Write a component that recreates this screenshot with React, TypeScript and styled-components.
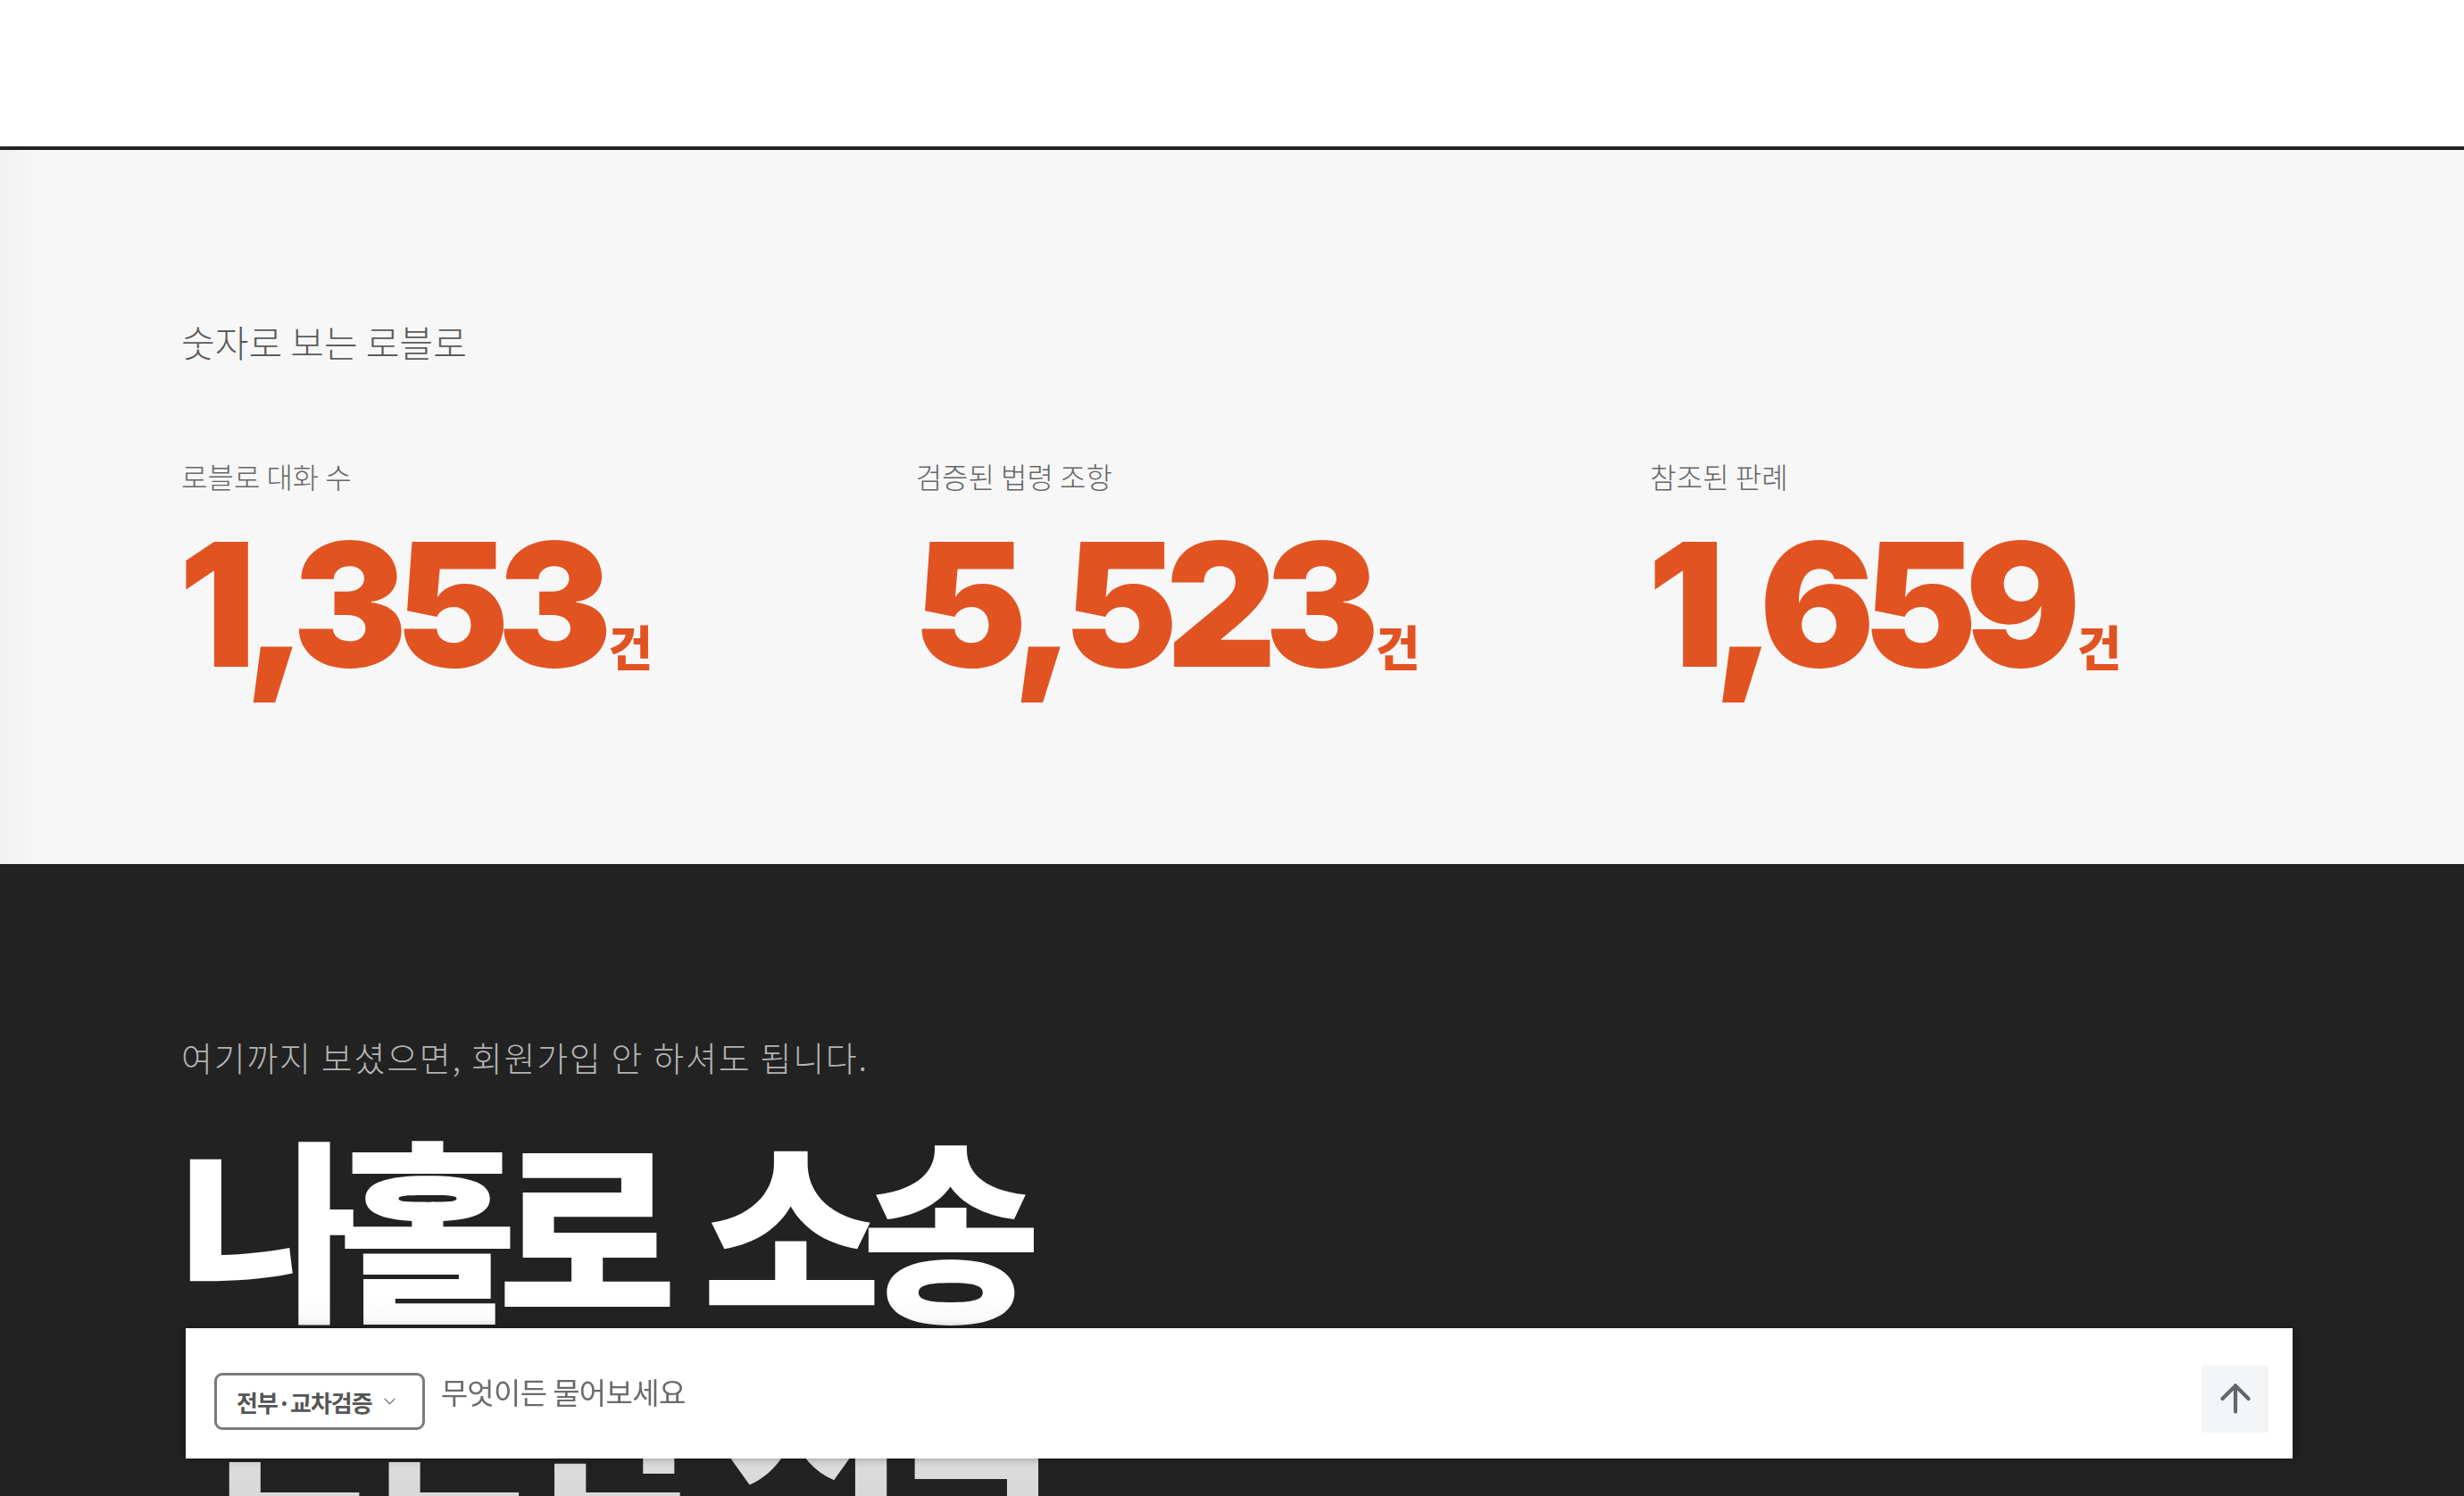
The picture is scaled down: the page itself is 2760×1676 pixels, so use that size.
import React from 'react';
import styled, { createGlobalStyle } from 'styled-components';
import { ArrowUp } from 'lucide-react';

const GlobalStyle = createGlobalStyle`
  html, body {
    margin: 0;
    padding: 0;
    height: 1676px;
    overflow: hidden;
    background: #222222;
  }
  body {
    font-family: "Noto Sans CJK KR", "Noto Sans", sans-serif;
  }
  * { box-sizing: border-box; }
`;

const sans = `"Noto Sans CJK KR", "Noto Sans", sans-serif`;

const Header = styled.header`
  height: 168px;
  background: #fff;
  border-bottom: 4px solid #222;
`;

const StatsSection = styled.section`
  height: 800px;
  background: linear-gradient(90deg, #f1f1f1 0px, #f7f7f7 44px, #f7f7f7 100%);
  padding: 194px 0 0;
`;

const Container = styled.div`
  width: 2360px;
  margin: 0 auto;
`;

const Eyebrow = styled.h2<{ $dark?: boolean }>`
  margin: 0;
  font-family: ${sans};
  font-weight: 300;
  font-size: ${p => (p.$dark ? 38 : 41)}px;
  line-height: 1;
  color: ${p => (p.$dark ? '#b4b4b4' : '#5c5c5c')};
  letter-spacing: ${p => (p.$dark ? '0.045em' : '0')};
  padding-left: 3px;
`;

const StatsGrid = styled.div`
  display: grid;
  grid-template-columns: repeat(3, 1fr);
  column-gap: 108px;
  margin-top: 114px;
`;

const Stat = styled.div`
  display: flex;
  flex-direction: column;
`;

const StatLabel = styled.div`
  font-family: ${sans};
  font-weight: 300;
  font-size: 32px;
  line-height: 1;
  color: #666;
  padding-left: 3px;
`;

const StatValue = styled.div`
  display: flex;
  align-items: baseline;
  margin-top: 32px;
  color: #e25322;
`;

const Number = styled.span`
  font-family: Inter, "Liberation Sans", sans-serif;
  font-weight: 900;
  font-size: 192px;
  line-height: 1;
  letter-spacing: -0.07em;
`;

const Unit = styled.span`
  font-family: ${sans};
  font-weight: 800;
  font-size: 54px;
  line-height: 1;
  margin-left: 9px;
`;

const CtaSection = styled.section`
  background: #222222;
  padding-top: 197px;
  height: 708px;
  overflow: hidden;
`;

const Title = styled.h1`
  margin: 57px 0 0;
  font-family: ${sans};
  font-weight: 900;
  font-size: 218px;
  line-height: 1;
  letter-spacing: -0.1em;
  word-spacing: 22px;
  background: linear-gradient(180deg, #ffffff 0%, #ffffff 45%, #e4e4e4 70%, #d6d6d6 100%);
  -webkit-background-clip: text;
  background-clip: text;
  color: transparent;
`;

const TitleLine = styled.span<{ $indent?: number }>`
  display: block;
  white-space: pre;
  padding-left: ${p => p.$indent || 0}px;
`;

const AskBar = styled.div`
  position: fixed;
  left: 50%;
  bottom: 42px;
  transform: translateX(calc(-50% + 8px));
  width: 2360px;
  height: 146px;
  background: #fff;
  box-shadow: 0 0 10px rgba(0, 0, 0, 0.35);
  display: flex;
  align-items: center;
  padding: 0 27px 0 32px;
`;

const ModeChip = styled.button`
  display: flex;
  align-items: center;
  gap: 13px;
  height: 64px;
  padding: 0 30px 0 22px;
  margin-top: 18px;
  border: 3px solid #7b7b7b;
  border-radius: 9px;
  background: #fff;
  font-family: ${sans};
  font-weight: 700;
  font-size: 26px;
  color: #555;
  letter-spacing: -0.04em;
  cursor: pointer;
`;

const Placeholder = styled.div`
  margin-left: 18px;
  margin-bottom: 4px;
  font-family: ${sans};
  font-weight: 400;
  font-size: 33px;
  color: #6b6b6b;
  letter-spacing: -0.02em;
`;

const SendButton = styled.button`
  margin-left: auto;
  margin-top: 12px;
  width: 75px;
  height: 75px;
  border: none;
  background: #f4f5f7;
  display: flex;
  align-items: center;
  justify-content: center;
  color: #63666c;
  cursor: pointer;
`;

const stats = [
  { label: '로블로 대화 수', value: '1,353' },
  { label: '검증된 법령 조항', value: '5,523' },
  { label: '참조된 판례', value: '1,659' },
];

const Chevron = () => (
  <svg width="13" height="8" viewBox="0 0 13 8" fill="none">
    <path d="M1 1.2l5.5 5.5L12 1.2" stroke="#808080" strokeWidth="1.4" strokeLinecap="round" strokeLinejoin="round" />
  </svg>
);

const App: React.FC = () => (
  <>
    <GlobalStyle />
    <Header />
    <StatsSection>
      <Container>
        <Eyebrow>숫자로 보는 로블로</Eyebrow>
        <StatsGrid>
          {stats.map(s => (
            <Stat key={s.label}>
              <StatLabel>{s.label}</StatLabel>
              <StatValue>
                <Number>{s.value}</Number>
                <Unit>건</Unit>
              </StatValue>
            </Stat>
          ))}
        </StatsGrid>
      </Container>
    </StatsSection>
    <CtaSection>
      <Container>
        <Eyebrow $dark>여기까지 보셨으면, 회원가입 안 하셔도 됩니다.</Eyebrow>
        <Title>
          <TitleLine>나홀로 소송</TitleLine>
          <TitleLine $indent={28}>든든한 시작</TitleLine>
        </Title>
      </Container>
    </CtaSection>
    <AskBar>
      <ModeChip>
        전부·교차검증
        <Chevron />
      </ModeChip>
      <Placeholder>무엇이든 물어보세요</Placeholder>
      <SendButton aria-label="보내기">
        <ArrowUp size={50} strokeWidth={2} />
      </SendButton>
    </AskBar>
  </>
);

export default App;
